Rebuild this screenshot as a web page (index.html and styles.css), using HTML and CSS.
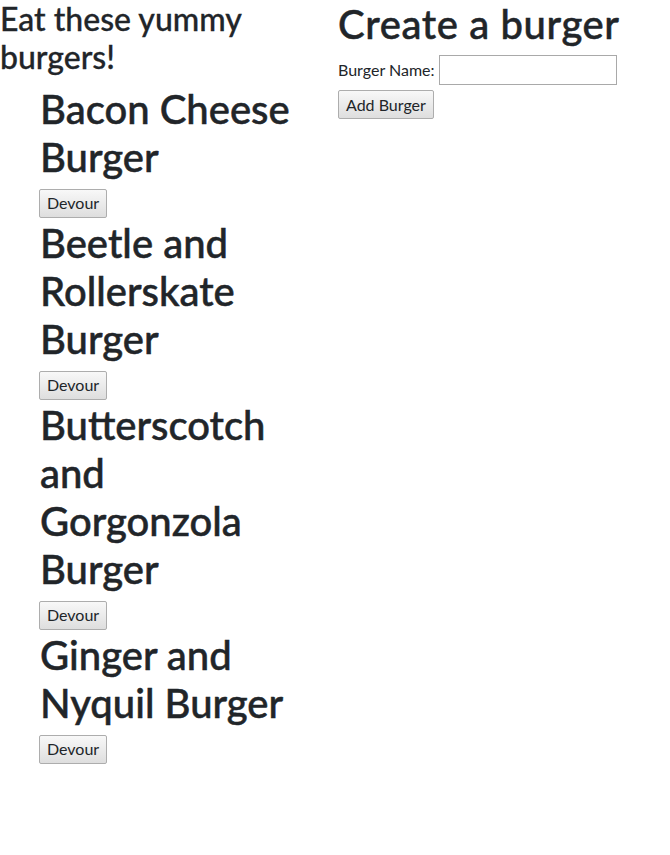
FILE: index.html
```html
<!DOCTYPE html>
<html lang="en">
<head>
<meta charset="utf-8">
<title>Burgers</title>
<link rel="stylesheet" href="styles.css">
</head>
<body>
<div class="row">
  <div class="col-left">
    <h2 class="title">Eat these yummy burgers!</h2>
    <ul class="burger-list">
      <li class="burger">
        <h1 class="burger-name">Bacon Cheese Burger</h1>
        <button class="btn">Devour</button>
      </li>
      <li class="burger">
        <h1 class="burger-name">Beetle and Rollerskate Burger</h1>
        <button class="btn">Devour</button>
      </li>
      <li class="burger">
        <h1 class="burger-name">Butterscotch and Gorgonzola Burger</h1>
        <button class="btn">Devour</button>
      </li>
      <li class="burger">
        <h1 class="burger-name">Ginger and Nyquil Burger</h1>
        <button class="btn">Devour</button>
      </li>
    </ul>
  </div>
  <div class="col-right">
    <h1 class="create-title">Create a burger</h1>
    <form class="create-form">
      <div class="field">
        <label class="field-label" for="burger-name">Burger Name:</label>
        <input class="field-input" id="burger-name" type="text">
      </div>
      <button class="btn" type="submit">Add Burger</button>
    </form>
  </div>
</div>
</body>
</html>
```
FILE: styles.css
```css
html, body {
  margin: 0;
  padding: 0;
  background: #fff;
}
body {
  font-family: Lato, "Open Sans", sans-serif;
  font-size: 16px;
  line-height: 1.5;
  color: #212529;
}
.row {
  display: flex;
  align-items: flex-start;
}
.col-left {
  width: 305px;
  flex: none;
}
.col-right {
  margin-left: 33px;
  flex: 1;
}
.title {
  font-size: 32px;
  line-height: 1.2;
  font-weight: 500;
  margin: 0 0 8px;
  -webkit-text-stroke: 0.3px #212529;
}
.burger-list {
  list-style: none;
  margin: 0 0 16px;
  padding-left: 40px;
}
.burger-name,
.create-title {
  font-size: 40px;
  line-height: 1.2;
  font-weight: 500;
  margin: 0 0 8px;
  -webkit-text-stroke: 0.5px #212529;
}
.create-title {
  letter-spacing: 0.6px;
}
.burger .btn {
  display: block;
  margin-left: -1px;
  margin-bottom: 1px;
}
.btn {
  font-family: inherit;
  font-size: 16px;
  line-height: 24px;
  height: 29px;
  padding: 1px 7px;
  border: 1px solid #adadad;
  border-radius: 2px;
  background: linear-gradient(#f8f8f8, #dedede);
  color: #212529;
  margin: 0;
  box-sizing: border-box;
}
.create-form {
  margin: 0;
}
.field {
  display: flex;
  align-items: center;
  gap: 4px;
  height: 30px;
  margin-top: -1px;
  margin-bottom: 5px;
}
.field-label {
  display: block;
}
.field-input {
  width: 178px;
  height: 30px;
  box-sizing: border-box;
  border: 1px solid #a9a9a9;
  padding: 1px 2px;
  font-family: inherit;
  font-size: 16px;
  margin: 0;
}
```
